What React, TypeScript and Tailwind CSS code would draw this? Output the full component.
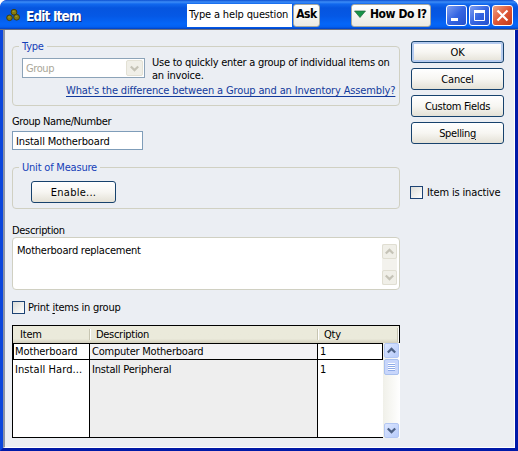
import type { ReactNode } from "react";

const buttonFace =
  "flex items-center justify-center rounded-[3px] border border-[#17426d] bg-linear-to-b from-white via-[#f7f6f2] to-[#e4e1d6] text-black";

function Text({ children, className = "" }: { children: ReactNode; className?: string }) {
  return <span className={`block whitespace-nowrap leading-[13px] ${className}`}>{children}</span>;
}

function GroupBox({ title, className, children }: { title: string; className: string; children: ReactNode }) {
  return (
    <div className={`relative rounded-[4px] border border-[#d0d0c2] ${className}`}>
      <div className="absolute -top-[7px] left-[6px] bg-[#ebeef3] px-[3px] text-[#1540b8]">
        <Text>{title}</Text>
      </div>
      {children}
    </div>
  );
}

function Chevron({ up = false, color }: { up?: boolean; color: string }) {
  return (
    <svg width="9" height="7" viewBox="0 0 9 7" fill="none" stroke={color} strokeWidth="2.2">
      <path d={up ? "M0.8 5.5 4.5 1.9 8.2 5.5" : "M0.8 1.5 4.5 5.1 8.2 1.5"} />
    </svg>
  );
}

function CheckBox() {
  return <div className="h-[13px] w-[13px] shrink-0 border border-[#1d4374] bg-linear-to-br from-[#dcdcd7] to-white" />;
}

function WindowButton({ close = false, children }: { close?: boolean; children: ReactNode }) {
  return (
    <div
      className={`h-[21px] w-[21px] rounded-[3px] border border-white bg-linear-to-br ${
        close ? "from-[#eba184] via-[#df5635] to-[#c33b19]" : "from-[#7f9df0] via-[#3565e2] to-[#2450cd]"
      }`}
    >
      <svg width="19" height="19" viewBox="0 0 19 19" fill="none" stroke="white">
        {children}
      </svg>
    </div>
  );
}

function ScrollButton({ up = false }: { up?: boolean }) {
  return (
    <div className="flex h-[15px] w-[15px] items-center justify-center rounded-[2px] border border-[#b3c7f3] bg-linear-to-br from-[#dce6ff] to-[#b7cbfa]">
      <Chevron up={up} color="#4d6185" />
    </div>
  );
}

function TitleBar() {
  return (
    <header className="flex h-[30px] shrink-0 items-start rounded-t-[7px] border-b border-[#6d7180] bg-[linear-gradient(#0b4ed0_0px,#3c8cf7_2px,#1168ee_4px,#0655df_8px,#0558e5_16px,#0566f8_24px,#0460f0_27px,#0140c2_29px)]">
      <svg className="mt-[8px] ml-[6px] shrink-0" width="15" height="15" viewBox="0 0 15 15" fill="#857b10" stroke="#3b380c" strokeWidth="0.9">
        <circle cx="8" cy="4.2" r="2.9" />
        <circle cx="3.5" cy="9.8" r="2.8" />
        <circle cx="10.6" cy="9.2" r="2.9" />
        <path d="M6.5 3.4h2M2.2 9h2M9.3 8.4h2" stroke="#aaa024" />
      </svg>
      <h1 className="mt-[8px] ml-[5px] w-[161px] text-[13.5px] leading-[16px] font-bold whitespace-nowrap text-white [text-shadow:1px_1px_0_#0a2878] tracking-[-0.85px]">
        Edit Item
      </h1>
      <div className="mt-[4px] flex h-[23px] w-[105px] items-center bg-white pb-[3px] pl-[2px]">
        <Text className="tracking-[-0.15px]">Type a help question</Text>
      </div>
      <div className="mt-[4px] ml-[1px] flex h-[23px] w-[27px] items-center justify-center rounded-[3px] border border-[#a8a99f] bg-linear-to-b from-white to-[#ecebe3] pb-[3px] text-[12px] font-bold">
        <Text className="tracking-[-0.5px]">Ask</Text>
      </div>
      <div className="mt-[4px] ml-[31px] flex h-[23px] w-[80px] items-center gap-[4px] rounded-[3px] border border-[#a8a99f] bg-linear-to-b from-white to-[#ecebe3] pb-[3px] pl-[2px] text-[12px] font-bold">
        <svg width="12" height="8" viewBox="0 0 12 8" className="shrink-0">
          <path d="M0.5 1h11L6 7.5z" fill="#189448" stroke="#24663c" strokeWidth=".7" />
        </svg>
        <Text className="tracking-[-0.45px]">How Do I?</Text>
      </div>
      <div className="mt-[5px] ml-[15px] flex gap-[2px]">
        <WindowButton>
          <path d="M4 13.5h7" strokeWidth="3" />
        </WindowButton>
        <WindowButton>
          <path d="M4.5 5v9.5h10V5" />
          <path d="M4 5.5h11" strokeWidth="3" />
        </WindowButton>
        <WindowButton close>
          <path d="M4.5 4.5l10 10M14.5 4.5l-10 10" strokeWidth="2.2" />
        </WindowButton>
      </div>
    </header>
  );
}

function ItemTable() {
  return (
    <div className="mt-[11px] h-[113px] w-[388px] bg-white">
      <div className="flex h-[18px] items-center border border-b-0 border-black bg-linear-to-b from-[#ebeadb] from-75% to-[#d2cebd]">
        <div className="w-[76px] pl-[7px]"><Text>Item</Text></div>
        <div className="h-[11px] w-[2px] border-l border-[#c7c5b2] bg-white" />
        <div className="w-[226px] pl-[5px]"><Text className="tracking-[-0.3px]">Description</Text></div>
        <div className="h-[11px] w-[2px] border-l border-[#c7c5b2] bg-white" />
        <div className="flex-1 pl-[5px]"><Text>Qty</Text></div>
        <div className="h-[14px] w-[2px] border-l border-[#c7c5b2] bg-white" />
      </div>
      <div className="flex h-[95px]">
        <div className="flex w-[78px] flex-col border border-black">
          <div className="flex h-[16px] items-center border-b border-l border-black pl-[1px]"><Text className="tracking-[-0.1px]">Motherboard</Text></div>
          <div className="flex h-[18px] items-center pl-[2px]"><Text className="tracking-[0.08px]">Install Hard...</Text></div>
        </div>
        <div className="flex w-[228px] flex-col border-y border-r border-black bg-[#eeeeee]">
          <div className="flex h-[16px] items-center border-b border-black bg-[#f3f2f5] pl-[2px]"><Text className="tracking-[-0.23px]">Computer Motherboard</Text></div>
          <div className="flex h-[18px] items-center pl-[2px]"><Text>Install Peripheral</Text></div>
        </div>
        <div className="flex w-[65px] flex-col border-y border-black">
          <div className="flex h-[16px] items-center border-r border-b border-black pl-[2px]"><Text>1</Text></div>
          <div className="flex h-[18px] items-center pl-[2px]"><Text>1</Text></div>
        </div>
        <div className="flex h-[95px] w-[17px] flex-col items-center bg-linear-to-r from-[#f0f0e9] to-white">
          <ScrollButton up />
          <div className="mt-[1px] flex h-[16px] w-[15px] flex-col items-center justify-center rounded-[2px] border border-[#a9c0ee] bg-[#c8d6fb]">
            <div className="h-[8px] w-[7px] bg-[repeating-linear-gradient(white_0px,white_1px,#8eaae8_1px,#8eaae8_2px)]" />
          </div>
          <div className="flex-1" />
          <ScrollButton />
        </div>
      </div>
    </div>
  );
}

export default function App() {
  return (
    <div className="h-[451px] w-[518px] overflow-hidden bg-white">
      <div className='flex h-[451px] w-[518px] flex-col overflow-hidden rounded-t-[7px] bg-[#0831d9] font-["DejaVu_Sans_Condensed","DejaVu_Sans",sans-serif] text-[11px] text-black [font-stretch:condensed] tracking-[-0.2px]'>
        <TitleBar />
        <div className="flex h-[421px] border-x-[3px] border-b-[3px] border-t-0 border-r-[#0019a8] border-b-[#0019a8] border-l-[#0a46dc]">
          <main className="flex w-full border-r border-b border-l-2 border-r-white border-b-white border-l-[#8b93a6] bg-[#ebeef3] pl-[7px]">
            <div className="w-[388px] shrink-0 pt-[16px]">
              <GroupBox title="Type" className="h-[60px] pl-[9px]">
                <div className="flex pt-[11px]">
                  <div className="flex h-[20px] w-[123px] items-center justify-between border border-[#8ca3b8] bg-white pl-[3px] text-[#aaa799]">
                    <Text className="tracking-[-0.4px]">Group</Text>
                    <div className="mr-px flex h-[16px] w-[17px] items-center justify-center rounded-[2px] border border-[#e3e1d5] bg-[#f0efe8]">
                      <Chevron color="#c5c3b7" />
                    </div>
                  </div>
                  <div className="-mt-[2px] ml-[7px]">
                    <Text className="tracking-[-0.25px]">Use to quickly enter a group of individual items on</Text>
                    <Text>an invoice.</Text>
                  </div>
                </div>
                <div className="mt-[2px] ml-[44px] w-[330px] text-[#123a9c] underline underline-offset-2">
                  <Text className="tracking-[-0.14px]">What's the difference between a Group and an Inventory Assembly?</Text>
                </div>
              </GroupBox>
              <div className="mt-[9px]"><Text className="tracking-[-0.38px]">Group Name/Number</Text></div>
              <div className="mt-[3px] flex h-[19px] w-[131px] items-center border border-[#7f9db9] bg-white pt-[2px] pl-[3px]">
                <Text className="tracking-[-0.15px]">Install Motherboard</Text>
              </div>
              <GroupBox title="Unit of Measure" className="mt-[17px] h-[42px] pl-[18px]">
                <div className={`${buttonFace} mt-[13px] h-[22px] w-[85px]`}><Text className="tracking-[0.25px]">Enable...</Text></div>
              </GroupBox>
              <div className="mt-[15px]"><Text className="tracking-[-0.33px]">Description</Text></div>
              <div className="flex h-[53px] justify-between rounded-[4px] border border-[#d0d0c2] bg-white pt-[6px] pl-[4px]">
                <Text className="tracking-[-0.23px]">Motherboard replacement</Text>
                <div className="mr-[2px] flex h-[41px] w-[15px] flex-col justify-between bg-[#f3f2ed]">
                  <div className="flex h-[15px] items-center justify-center rounded-[2px] border border-[#e0ded2] bg-[#f0efe8]"><Chevron up color="#c5c3b7" /></div>
                  <div className="flex h-[15px] items-center justify-center rounded-[2px] border border-[#e0ded2] bg-[#f0efe8]"><Chevron color="#c5c3b7" /></div>
                </div>
              </div>
              <div className="mt-[11px] flex items-center gap-[3px]">
                <CheckBox />
                <Text className="tracking-[-0.25px]">Print <u className="underline-offset-2">i</u>tems in group</Text>
              </div>
              <ItemTable />
            </div>
            <aside className="ml-[10px] pt-[11px]">
              <div className="ml-[1px] flex w-[93px] flex-col gap-[5px]">
                <div className={`${buttonFace} h-[22px] shadow-[inset_0_0_0_2px_#b5cbef]`}><Text>OK</Text></div>
                <div className={`${buttonFace} h-[22px]`}><Text>Cancel</Text></div>
                <div className={`${buttonFace} h-[22px]`}><Text className="tracking-[-0.3px]">Custom Fields</Text></div>
                <div className={`${buttonFace} h-[22px]`}><Text className="tracking-[-0.35px]">Spellin<u className="underline-offset-2">g</u></Text></div>
              </div>
              <div className="mt-[42px] flex items-center gap-[4px]">
                <CheckBox />
                <Text className="tracking-[-0.15px]">Item is inactive</Text>
              </div>
            </aside>
          </main>
        </div>
      </div>
    </div>
  );
}
